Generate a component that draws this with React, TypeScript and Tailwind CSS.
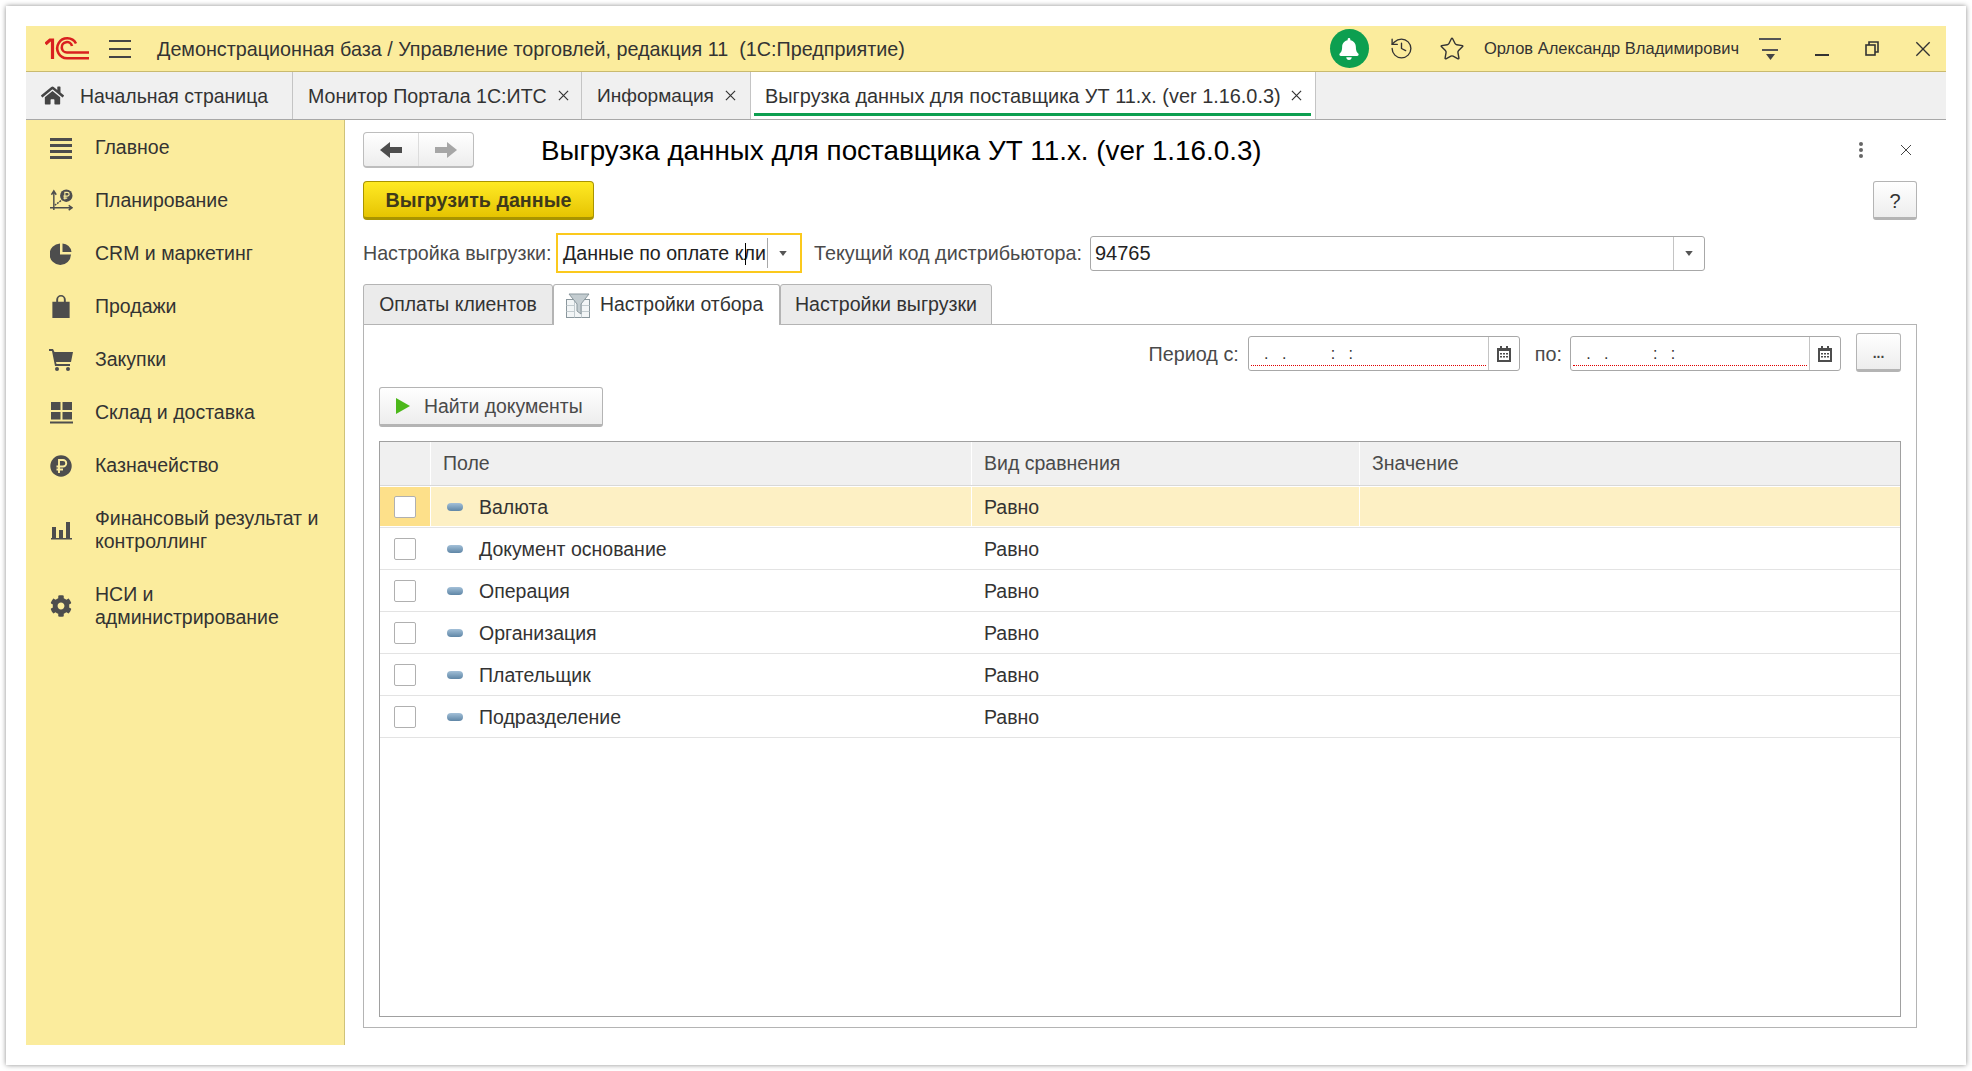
import { FaBell, FaCog, FaHome } from 'react-icons/fa'
import { History, Star } from 'lucide-react'

const ICON = '#4d4d4d'

function Logo() {
  return (
    <svg width="44" height="23" viewBox="0 0 44 23" fill="none" stroke="#d9201f" strokeWidth="2.6">
      <path d="M0.5 7 L5 3 H7.5 V22" strokeWidth="3.2" />
      <path d="M31 6.5 A10 10 0 1 0 22 21.3 H44" />
      <path d="M27 9 A5.2 5.2 0 1 0 22 15.5 H44" />
    </svg>
  )
}

function MainIcon() {
  return (
    <svg width="22" height="22" viewBox="0 0 22 22" fill={ICON}>
      <rect x="0" y="1" width="22" height="3" />
      <rect x="0" y="7" width="22" height="3" />
      <rect x="0" y="13" width="22" height="3" />
      <rect x="0" y="19" width="22" height="3" />
    </svg>
  )
}

function PlanIcon() {
  return (
    <svg width="23" height="23" viewBox="0 0 24 24" fill="none" stroke={ICON} strokeWidth="1.5">
      <path d="M4 22 V3 M1.5 6 L4 2 L6.5 6" />
      <path d="M0 19.5 H23 M19.5 17 L23 19.5 L19.5 22" />
      <path d="M5 17 L13 11" strokeDasharray="2 1" />
      <circle cx="17" cy="7" r="6.5" fill={ICON} stroke="none" />
      <path d="M15.5 11 V3.5 H18 A2 2 0 0 1 18 7.5 H14 M14 9.5 H18" stroke="#fbec9d" strokeWidth="1.2" />
    </svg>
  )
}

function PieIcon() {
  return (
    <svg width="22" height="22" viewBox="0 0 22 22" fill={ICON}>
      <path d="M10 0.5 V11.5 H21 A10.7 10.7 0 1 1 10 0.5 Z" />
      <path d="M12.5 0.5 A9.5 9.5 0 0 1 21.5 9 H12.5 Z" />
    </svg>
  )
}

function BagIcon() {
  return (
    <svg width="18" height="23" viewBox="0 0 18 24" fill={ICON}>
      <path d="M0 7 H4 V5 A5 5 0 0 1 14 5 V7 H18 V24 H0 Z M6 7 H12 V5 A3 3.4 0 0 0 6 5 Z" fillRule="evenodd" />
    </svg>
  )
}

function CartIcon() {
  return (
    <svg width="24" height="22" viewBox="0 0 24 22" fill={ICON}>
      <path d="M0 0 H4 L5.5 3 H24 L22 13 H7 L7.5 15 H21 V17 H6 L3 2 H0 Z" />
      <circle cx="8" cy="20" r="2" />
      <circle cx="19" cy="20" r="2" />
    </svg>
  )
}

function StockIcon() {
  return (
    <svg width="23" height="22" viewBox="0 0 23 22" fill={ICON}>
      <rect x="1" y="0" width="9.5" height="8" />
      <rect x="12.5" y="0" width="9.5" height="8" />
      <rect x="1" y="10" width="9.5" height="7.5" />
      <rect x="12.5" y="10" width="9.5" height="7.5" />
      <rect x="0" y="19.5" width="23" height="2" />
    </svg>
  )
}

function RubleIcon() {
  return (
    <svg width="22" height="22" viewBox="0 0 22 22" fill="none">
      <circle cx="11" cy="11" r="10.7" fill={ICON} />
      <path d="M9 18 V5 H13 A3.2 3.2 0 0 1 13 11.5 H6.5 M6.5 14.5 H13" stroke="#fbec9d" strokeWidth="1.9" />
    </svg>
  )
}

function BarsIcon() {
  return (
    <svg width="21" height="19" viewBox="0 0 21 19" fill={ICON}>
      <rect x="1" y="6" width="4" height="11" />
      <rect x="8" y="9" width="4" height="8" />
      <rect x="15" y="1" width="4" height="16" />
      <rect x="0" y="17" width="21" height="1.5" />
    </svg>
  )
}

const menu = [
  { label: ['Главное'], icon: <MainIcon /> },
  { label: ['Планирование'], icon: <PlanIcon /> },
  { label: ['CRM и маркетинг'], icon: <PieIcon /> },
  { label: ['Продажи'], icon: <BagIcon /> },
  { label: ['Закупки'], icon: <CartIcon /> },
  { label: ['Склад и доставка'], icon: <StockIcon /> },
  { label: ['Казначейство'], icon: <RubleIcon /> },
  { label: ['Финансовый результат и', 'контроллинг'], icon: <BarsIcon /> },
  { label: ['НСИ и', 'администрирование'], icon: <FaCog size={22} color={ICON} /> },
]

const rows = ['Валюта', 'Документ основание', 'Операция', 'Организация', 'Плательщик', 'Подразделение']

function CloseX({ size, color = '#333', sw = 1.3 }: { size: number; color?: string; sw?: number }) {
  return (
    <svg width={size} height={size} viewBox="0 0 12 12" stroke={color} strokeWidth={sw} className="shrink-0">
      <path d="M1 1 L11 11 M11 1 L1 11" />
    </svg>
  )
}

function Arrow() {
  return (
    <svg width="8" height="5" viewBox="0 0 9 6" fill="#555">
      <path d="M0 0 H9 L4.5 6 Z" />
    </svg>
  )
}

function Calendar() {
  return (
    <svg width="14" height="16" viewBox="0 0 14 16" fill="#4d4d4d">
      <path d="M0 2 H3 V0 H5 V2 H9 V0 H11 V2 H14 V16 H0 Z" />
      <rect x="2" y="5" width="10" height="9" fill="#fff" />
      <path d="M3 7 H5 V8.5 H3 Z M6 7 H8 V8.5 H6 Z M9 7 H11 V8.5 H9 Z M3 10 H5 V11.5 H3 Z M6 10 H8 V11.5 H6 Z M9 10 H11 V11.5 H9 Z" />
    </svg>
  )
}

function DateField({ width }: { width: string }) {
  return (
    <div className={`flex h-[35px] items-stretch rounded-[3px] border border-[#a8a8a8] bg-white ${width}`}>
      <div className="mx-[2px] mb-[4px] flex-1 overflow-hidden whitespace-pre border-b border-dotted border-b-[#e00000] text-[16px] leading-[34px] text-[#333]">
        {'   .   .          :   :'}
      </div>
      <div className="flex w-[31px] items-center justify-center border-l border-l-[#c4c4c4]">
        <Calendar />
      </div>
    </div>
  )
}

function FunnelIcon() {
  return (
    <svg width="24" height="25" viewBox="0 0 24 25" fill="none" stroke="#8a979d" strokeWidth="1">
      <rect x="0.5" y="6.5" width="23" height="18" fill="#f2f5f6" />
      <path d="M8.5 6.5 V24.5 M15.5 6.5 V24.5 M0.5 12.5 H8 M0.5 18.5 H8 M16 12.5 H23.5 M16 18.5 H23.5" stroke="#c2cbcf" />
      <path d="M3 1 H23 L15 11 V21 L11 18 V11 Z" fill="#c3ccd0" />
    </svg>
  )
}

export default function App() {
  return (
    <div className="h-[1071px] overflow-hidden bg-white pl-[6px] pt-[6px] font-['Liberation_Sans',sans-serif] text-[19.5px] text-[#333]">
      <div className="h-[1059px] w-[1960px] pl-[20px] pt-[20px] shadow-[0_0_5px_rgba(0,0,0,0.45)]">
        <div className="flex h-[1019px] w-[1920px] flex-col">
          {/* Top bar */}
          <div className="flex h-[46px] shrink-0 items-center border-b border-b-[#c9ba6f] bg-[#fbec9d] pl-[19px]">
            <Logo />
            <div className="ml-[20px] flex h-[18px] w-[22px] flex-col justify-between">
              <div className="h-[2px] bg-[#444]" />
              <div className="h-[2px] bg-[#444]" />
              <div className="h-[2px] bg-[#444]" />
            </div>
            <span className="ml-[26px] whitespace-pre pt-[2px] text-[19.75px] leading-none">
              Демонстрационная база / Управление торговлей, редакция 11  (1С:Предприятие)
            </span>
            <div className="ml-auto flex items-center">
              <div className="flex size-[39px] items-center justify-center rounded-full bg-[#0d9f50]">
                <FaBell size={22} color="#fff" />
              </div>
              <History size={25} strokeWidth={1.3} color="#333" className="ml-[20px]" />
              <Star size={26} strokeWidth={1.3} color="#333" className="ml-[25px]" />
              <span className="ml-[19px] text-[16.5px] leading-none">Орлов Александр Владимирович</span>
              <div className="ml-[20px] flex w-[22px] flex-col items-center gap-[9px]">
                <div className="h-[2px] w-full bg-[#555]" />
                <div className="h-[2px] w-[16px] bg-[#555]" />
                <svg width="9" height="6" viewBox="0 0 9 6" fill="#444" className="-mt-[6px]">
                  <path d="M0 0 H9 L4.5 6 Z" />
                </svg>
              </div>
              <div className="ml-[34px] mt-[12px] h-[2px] w-[14px] bg-[#333]" />
              <svg width="14" height="15" viewBox="0 0 14 15" fill="none" stroke="#333" strokeWidth="1.6" className="ml-[36px]">
                <rect x="1" y="4" width="9" height="10" />
                <path d="M4 4 V1 H13 V11 H10" />
              </svg>
              <div className="ml-[36px] mr-[15px]">
                <CloseX size={16} sw={1} />
              </div>
            </div>
          </div>

          {/* Open tabs */}
          <div className="flex h-[48px] shrink-0 border-b border-b-[#a8a8a8] bg-[#f0f0f0]">
            <div className="flex w-[267px] items-center border-r border-r-[#c4c4c4] pl-[15px]">
              <FaHome size={23} color="#444" />
              <span className="ml-[16px] pt-[2px] text-[19.45px]">Начальная страница</span>
            </div>
            <div className="flex w-[289px] items-center border-r border-r-[#c4c4c4] pl-[15px]">
              <span className="pt-[2px] text-[19.6px]">Монитор Портала 1С:ИТС</span>
              <span className="ml-[11px]"><CloseX size={11} /></span>
            </div>
            <div className="flex w-[169px] items-center border-r border-r-[#c4c4c4] pl-[15px]">
              <span className="pt-[2px] text-[19.1px]">Информация</span>
              <span className="ml-[11px]"><CloseX size={11} /></span>
            </div>
            <div className="relative flex w-[565px] items-center border-r border-r-[#c4c4c4] bg-white pl-[14px]">
              <span className="pt-[2px] text-[19.9px]">Выгрузка данных для поставщика УТ 11.х. (ver 1.16.0.3)</span>
              <span className="ml-[10px]"><CloseX size={11} /></span>
              <div className="absolute bottom-[3px] left-[3px] right-[4px] h-[3px] bg-[#0d9f50]" />
            </div>
          </div>

          <div className="flex min-h-0 flex-1">
            {/* Sidebar */}
            <div className="w-[319px] shrink-0 border-r border-r-[#cfc279] bg-[#fbec9d]">
              {menu.map((m) => (
                <div key={m.label[0]} className="flex items-center pb-[14px] pt-[16px]">
                  <div className="flex w-[69px] shrink-0 justify-center pl-px">{m.icon}</div>
                  <div className="text-[19.5px] leading-[23px]">
                    {m.label.map((l) => (
                      <div key={l}>{l}</div>
                    ))}
                  </div>
                </div>
              ))}
            </div>

            {/* Form */}
            <div className="flex min-w-0 flex-1 flex-col pb-[17px] pl-[18px] pr-[29px] pt-[12px]">
              <div className="flex h-[36px] shrink-0 items-center">
                <div className="flex h-[36px] w-[111px] rounded-[4px] border border-[#bdbdbd] border-b-[2px] bg-linear-to-b from-white to-[#ededed]">
                  <div className="flex flex-1 items-center justify-center border-r border-r-[#dcdcdc]">
                    <svg width="22" height="16" viewBox="0 0 22 16" fill="#4d4d4d">
                      <path d="M0 8 L10 0 V5 H22 V11 H10 V16 Z" />
                    </svg>
                  </div>
                  <div className="flex flex-1 items-center justify-center">
                    <svg width="22" height="16" viewBox="0 0 22 16" fill="#a6a6a6">
                      <path d="M22 8 L12 0 V5 H0 V11 H12 V16 Z" />
                    </svg>
                  </div>
                </div>
                <h1 className="ml-[67px] pt-[2px] text-[27.8px] leading-none text-black">
                  Выгрузка данных для поставщика УТ 11.х. (ver 1.16.0.3)
                </h1>
                <div className="ml-auto flex items-center pr-[5px]">
                  <div className="flex flex-col gap-[2px]">
                    <div className="size-[4px] rounded-full bg-[#666]" />
                    <div className="size-[4px] rounded-full bg-[#666]" />
                    <div className="size-[4px] rounded-full bg-[#666]" />
                  </div>
                  <div className="ml-[37px]">
                    <CloseX size={12} color="#444" sw={1} />
                  </div>
                </div>
              </div>

              <div className="mt-[13px] flex h-[39px] shrink-0 items-stretch justify-between">
                <button className="w-[231px] rounded-[4px] border border-[#a99400] border-b-[3px] bg-linear-to-b from-[#ffea22] to-[#e6c400] pt-[2px] text-[19.7px] font-bold text-[#3f3a1a]">
                  Выгрузить данные
                </button>
                <button className="w-[44px] rounded-[3px] border border-[#b4b4b4] border-b-[3px] bg-linear-to-b from-white to-[#ededed] pt-[2px] text-[20px] text-[#333]">
                  ?
                </button>
              </div>

              <div className="mt-[13px] flex h-[40px] shrink-0 items-center">
                <span className="w-[193px] shrink-0 pt-[2px] text-[19.65px] text-[#4a4a4a]">Настройка выгрузки:</span>
                <div className="relative flex h-[40px] w-[246px] shrink-0 items-center border-2 border-[#fbc91d] bg-white">
                  <div className="flex-1 whitespace-nowrap pl-[5px] pt-[1px] text-[19.6px] text-[#222]">
                    Данные по оплате кли
                  </div>
                  <div className="flex h-[30px] w-[33px] shrink-0 items-center justify-center border-l border-l-[#a8a8a8] pr-[3px]">
                    <Arrow />
                  </div>
                  <div className="absolute left-[187px] top-[8px] h-[22px] w-px bg-black" />
                </div>
                <span className="ml-[12px] w-[276px] shrink-0 pt-[2px] text-[19.8px] text-[#4a4a4a]">Текущий код дистрибьютора:</span>
                <div className="flex h-[35px] w-[615px] shrink-0 items-stretch rounded-[3px] border border-[#a8a8a8] bg-white">
                  <div className="flex flex-1 items-center pl-[4px] text-[20px] text-[#222]">94765</div>
                  <div className="flex w-[31px] items-center justify-center border-l border-l-[#c4c4c4]">
                    <Arrow />
                  </div>
                </div>
              </div>

              <div className="relative z-10 mt-[11px] flex h-[41px] shrink-0 -mb-px">
                <div className="flex w-[190px] items-center justify-center rounded-t-[3px] border border-[#b4b4b4] bg-[#ebebeb] pt-[1px] text-[19.4px]">
                  Оплаты клиентов
                </div>
                <div className="flex w-[227px] items-center rounded-t-[3px] border border-b-0 border-[#b4b4b4] bg-white pl-[12px] text-[19.4px]">
                  <FunnelIcon />
                  <span className="ml-[10px]">Настройки отбора</span>
                </div>
                <div className="flex w-[212px] items-center justify-center rounded-t-[3px] border border-[#b4b4b4] bg-[#ebebeb] text-[19.6px]">
                  Настройки выгрузки
                </div>
              </div>

              {/* Panel */}
              <div className="flex min-h-0 flex-1 flex-col border border-[#b4b4b4] px-[15px] pb-[10px] pt-[8px]">
                <div className="flex h-[40px] shrink-0 items-start justify-end">
                  <span className="mr-[9px] mt-[4px] text-[19.8px] leading-[35px] text-[#4a4a4a]">Период с:</span>
                  <div className="mt-[3px]"><DateField width="w-[272px]" /></div>
                  <span className="ml-[15px] mr-[8px] mt-[4px] text-[19.8px] leading-[35px] text-[#4a4a4a]">по:</span>
                  <div className="mt-[3px]"><DateField width="w-[271px]" /></div>
                  <button className="ml-[15px] h-[39px] w-[45px] rounded-[3px] border border-[#b4b4b4] border-b-[3px] bg-linear-to-b from-white to-[#ededed] pt-[3px] text-[14px] font-bold text-[#444]">
                    ...
                  </button>
                </div>
                <button className="mt-[14px] flex h-[40px] w-[224px] shrink-0 items-center rounded-[3px] border border-[#b4b4b4] border-b-[3px] bg-linear-to-b from-white to-[#ededed] pl-[16px] text-[19.4px] text-[#4a4a4a]">
                  <svg width="14" height="16" viewBox="0 0 14 16" fill="#4cb81a">
                    <path d="M0 0 L14 8 L0 16 Z" />
                  </svg>
                  <span className="ml-[14px] pt-[2px]">Найти документы</span>
                </button>

                {/* Table */}
                <div className="mt-[14px] min-h-0 flex-1 border border-[#a0a0a0]">
                  <div className="flex h-[44px] border-b border-b-[#d8d8d8] bg-[#f0f0f0] text-[19.5px] text-[#4a4a4a]">
                    <div className="w-[51px] border-r border-r-white" />
                    <div className="flex w-[541px] items-center border-r border-r-white pl-[12px]">Поле</div>
                    <div className="flex w-[388px] items-center border-r border-r-white pl-[12px]">Вид сравнения</div>
                    <div className="flex flex-1 items-center pl-[12px]">Значение</div>
                  </div>
                  {rows.map((r, i) => (
                    <div key={r} className="flex h-[42px] border-b border-b-[#e3e3e3] text-[19.5px] text-[#333]">
                      <div className={`flex w-[51px] items-center justify-center border-r ${i === 0 ? 'my-px border-r-white bg-[#fde08a]' : 'border-r-transparent'}`}>
                        <div className="size-[22px] rounded-[2px] border border-[#b0b0b0] bg-white" />
                      </div>
                      <div className={`flex w-[541px] items-center pl-[16px] ${i === 0 ? 'my-px border-r border-r-white bg-[#fdf0c4]' : ''}`}>
                        <div className="h-[8px] w-[16px] rounded-full bg-linear-to-b from-[#a3c0d8] to-[#5f86a6]" />
                        <span className="ml-[16px] pt-[2px]">{r}</span>
                      </div>
                      <div className={`flex w-[388px] items-center pl-[12px] pt-[2px] ${i === 0 ? 'my-px border-r border-r-white bg-[#fdf0c4]' : ''}`}>Равно</div>
                      <div className={`flex-1 ${i === 0 ? 'my-px bg-[#fdf0c4]' : ''}`} />
                    </div>
                  ))}
                </div>
              </div>
            </div>
          </div>
        </div>
      </div>
    </div>
  )
}
